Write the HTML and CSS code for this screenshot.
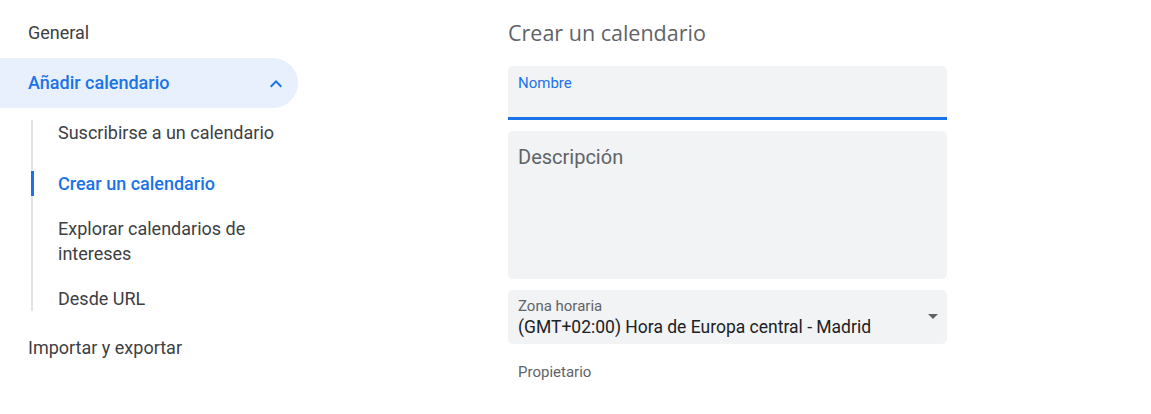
FILE: index.html
```html
<!DOCTYPE html>
<html lang="es">

<head>
    <meta charset="UTF-8">
    <meta name="viewport" content="width=device-width, initial-scale=1.0">
    <title>Crear un calendario</title>
    <link rel="stylesheet" href="styles.css">
</head>

<body>
    <div class="page">
        <nav class="sidebar">
            <div class="nav-item">General</div>
            <div class="nav-item active">
                <span>Añadir calendario</span>
                <svg class="chevron" width="24" height="24" viewBox="0 0 24 24">
                    <path d="M12 8l-6 6 1.41 1.41L12 10.83l4.59 4.58L18 14z" fill="#1a73e8"/>
                </svg>
            </div>
            <div class="sub-list">
                <div class="sub-item first">Suscribirse a un calendario</div>
                <div class="sub-item current">Crear un calendario</div>
                <div class="sub-item">Explorar calendarios de intereses</div>
                <div class="sub-item">Desde URL</div>
            </div>
            <div class="nav-item">Importar y exportar</div>
        </nav>

        <main class="content">
            <h1 class="title">Crear un calendario</h1>

            <div class="field name">
                <label>Nombre</label>
            </div>

            <div class="field description">
                <span class="placeholder">Descripción</span>
            </div>

            <div class="field select">
                <div class="select-text">
                    <label>Zona horaria</label>
                    <div class="value">(GMT+02:00) Hora de Europa central - Madrid</div>
                </div>
                <svg class="arrow" width="24" height="24" viewBox="0 0 24 24">
                    <path d="M7 10l5 5 5-5z" fill="#5f6368"/>
                </svg>
            </div>

            <div class="owner">Propietario</div>
        </main>
    </div>
</body>

</html>
```

FILE: styles.css
```css
* {
    margin: 0;
    padding: 0;
    box-sizing: border-box;
}

body {
    background: #fff;
    font-family: Roboto, "Liberation Sans", Arial, sans-serif;
    color: #3c4043;
}

.page {
    display: flex;
    align-items: flex-start;
}

.sidebar {
    width: 298px;
    flex-shrink: 0;
    padding-top: 8px;
}

.nav-item {
    height: 50px;
    line-height: 50px;
    padding-left: 28px;
    font-size: 18px;
    color: #3c4043;
}

.nav-item.active {
    display: flex;
    align-items: center;
    justify-content: space-between;
    padding-right: 10px;
    background: #e8f0fe;
    border-radius: 0 25px 25px 0;
    color: #1a73e8;
    font-weight: 500;
}

.chevron {
    display: block;
    margin-top: 1px;
}

.sub-list {
    display: flex;
    flex-direction: column;
    gap: 20px;
    margin: 12px 0 12px 31px;
    border-left: 2px solid #e3e3e3;
}

.sub-item {
    padding-left: 25px;
    font-size: 18px;
    line-height: 25px;
    color: #3c4043;
}

.sub-item.first {
    margin-bottom: 6px;
}

.sub-item.current {
    margin-left: -2px;
    padding-left: 24px;
    border-left: 3px solid #1a73e8;
    color: #1a73e8;
    font-weight: 500;
}

.content {
    width: 439px;
    margin-left: 210px;
    padding-top: 17px;
}

.title {
    font-family: "Open Sans", Roboto, sans-serif;
    font-size: 21.5px;
    font-weight: 400;
    line-height: 32px;
    color: #5f6368;
    margin-bottom: 17px;
}

.field {
    background: #f1f3f4;
    border-radius: 5px;
    padding-left: 10px;
}

.field label {
    display: block;
    font-size: 15px;
    line-height: 18px;
    color: #5f6368;
}

.field.name {
    height: 54px;
    padding-top: 8px;
    border-radius: 5px 5px 0 0;
    border-bottom: 3px solid #1a73e8;
}

.field.name label {
    color: #1a73e8;
}

.field.description {
    height: 148px;
    margin-top: 11px;
    padding-top: 14px;
}

.placeholder {
    font-size: 20px;
    line-height: 24px;
    color: #5f6368;
}

.field.select {
    display: flex;
    align-items: center;
    margin-top: 11px;
    height: 54px;
    padding-right: 2px;
}

.select-text {
    flex: 1;
    padding-top: 1px;
}

.select-text label {
    line-height: 19px;
}

.value {
    font-size: 17.5px;
    line-height: 22px;
    color: #202124;
}

.arrow {
    display: block;
    margin-top: -2px;
}

.owner {
    margin-top: 19px;
    padding-left: 10px;
    font-size: 15px;
    line-height: 18px;
    color: #5f6368;
}
```
